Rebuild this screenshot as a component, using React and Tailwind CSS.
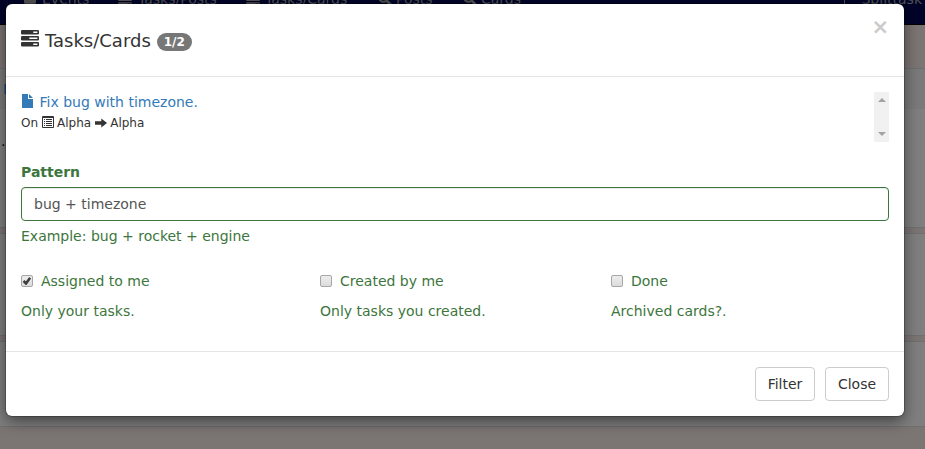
const navItem = 'flex items-center whitespace-nowrap';

function ServerIcon({ className }) {
  return (
    <svg className={className} viewBox="0 0 18 17" fill="currentColor" fillRule="evenodd">
      <path d="M.8 0h16.4l.8.8v2.9l-.8.8H.8L0 3.7V.8zM12.3 1.6v1.3h4.1V1.6z" />
      <path d="M.8 6h16.4l.8.8v2.9l-.8.8H.8L0 9.7V6.8zM8.3 7.6v1.3h8.1V7.6z" />
      <path d="M.8 12h16.4l.8.8v2.9l-.8.8H.8L0 15.7V12.8zM12.3 13.6v1.3h4.1v-1.3z" />
    </svg>
  );
}

function FileIcon() {
  return (
    <svg className="h-[14px] w-[12px] shrink-0" viewBox="0 0 12 14" fill="currentColor">
      <path d="M1 0h6v5h5v9H1z" />
      <path d="M8 0 12 4H8z" />
    </svg>
  );
}

function ListIcon() {
  return (
    <svg className="h-[12px] w-[12px] shrink-0" viewBox="0 0 12 12">
      <path d="M.5.5h11v11H.5zM.5 1.5h11" fill="none" stroke="currentColor" />
      <path
        d="M2 3.5h1M4 3.5h6M2 5.5h1M4 5.5h6M2 7.5h1M4 7.5h6M2 9.5h1M4 9.5h6"
        fill="none"
        stroke="currentColor"
      />
    </svg>
  );
}

function ArrowIcon() {
  return (
    <svg className="h-[10px] w-[12px] shrink-0" viewBox="0 0 12 10" fill="currentColor">
      <path d="M0 3.3h6.3V.4L12 5 6.3 9.6V6.7H0z" />
    </svg>
  );
}

function SearchIcon() {
  return (
    <svg className="h-[14px] w-[14px]" viewBox="0 0 14 14" fill="none" stroke="currentColor">
      <circle cx="5.5" cy="5.5" r="4.3" strokeWidth="2" />
      <path d="m9 9 4 4" strokeWidth="2.6" />
    </svg>
  );
}

function Check({ checked, label, help }) {
  return (
    <div>
      <label className="flex h-5 items-center">
        <span className="flex h-[12px] w-[12px] items-center justify-center rounded-[2px] border border-[#a6a6a6] bg-linear-to-b from-[#ededed] to-[#dcdcdc]">
          {checked && (
            <svg className="h-[8px] w-[8px] shrink-0" viewBox="0 0 8 8" fill="none" stroke="#3c3c3c">
              <path d="M.5 4 3 6.5 7.2.8" strokeWidth="2.5" />
            </svg>
          )}
        </span>
        <span className="ml-2">{label}</span>
      </label>
      <p className="mt-[10px] h-5">{help}</p>
    </div>
  );
}

function Backdrop() {
  return (
    <div className="flex h-full flex-col">
      <nav className="flex h-[25px] shrink-0 items-start border-b border-black bg-[#000428] text-[#525252]">
        <div className="-mt-[11px] flex h-5 w-full">
          <div className={`${navItem} ml-[24px] w-[94px]`}>
            <svg className="mr-[6px] h-[14px] w-[12px]" viewBox="0 0 12 14" fill="currentColor">
              <path d="M0 0h12v10c0 2-3 3.5-6 3.5S0 12 0 10z" />
            </svg>
            Events
          </div>
          <div className={`${navItem} w-[128px]`}>
            <ServerIcon className="mr-[6px] h-[13px] w-[14px]" />
            Tasks/Posts
          </div>
          <div className={`${navItem} w-[132px]`}>
            <ServerIcon className="mr-[5px] h-[13px] w-[14px]" />
            Tasks/Cards
          </div>
          <div className={`${navItem} w-[85px] gap-1`}><SearchIcon />Posts</div>
          <div className={`${navItem} gap-1`}><SearchIcon />Cards</div>
          <div className={`${navItem} ml-auto mr-[3px]`}>
            <span className="mr-[16px] h-[14px] w-px bg-[#4d4d4d]" />
            Splittask
          </div>
        </div>
      </nav>
      <div className="h-[43px] shrink-0" />
      <section className="h-[160px] shrink-0 border-y border-[#6f6f6f] bg-[#7f7f7f]">
        <div className="h-[40px] bg-[#7a7a7a] pt-[10px] pl-[3px] text-[#0d4f8b]">N</div>
        <div className="pt-[22px] pl-px text-black">.</div>
      </section>
      <section className="mt-[5px] h-[103px] shrink-0 border-y border-[#6f6f6f] bg-[#7f7f7f]" />
      <section className="mt-[5px] h-[86px] shrink-0 border-y border-[#6f6f6f] bg-[#7f7f7f]" />
    </div>
  );
}

export default function App() {
  return (
    <div className="relative h-[449px] w-[925px] overflow-hidden bg-[#7b7574] font-['DejaVu_Sans',sans-serif] text-[14px] leading-5 text-[#333]">
      <Backdrop />
      <div className="absolute top-[4px] left-[6px] flex h-[412px] w-[898px] flex-col rounded-[6px] bg-white shadow-[0_5px_15px_rgba(0,0,0,0.5),0_0_0_1px_rgba(0,0,0,0.2)]">
        <header className="flex h-[73px] shrink-0 items-start border-b border-[#e5e5e5] px-[15px]">
          <ServerIcon className="mt-[26px] h-[17px] w-[18px]" />
          <h4 className="mt-[27px] ml-[6px] text-[18px] leading-5 font-normal">Tasks/Cards</h4>
          <span className="mt-[29px] ml-[6px] flex h-[18px] w-[35px] items-center justify-center rounded-full bg-[#777] text-[12px] leading-3 font-bold text-white">
            1/2
          </span>
          <button className="mt-[13px] ml-auto text-[21px] leading-[21px] font-bold text-[#cbcbcb]">×</button>
        </header>
        <main className="flex grow flex-col px-[15px] pt-[15px] text-[#3c763d]">
          <div className="flex h-[50px] shrink-0 justify-between">
            <div>
              <a className="flex h-5 items-center text-[#337ab7]">
                <span className="-mt-[2px]"><FileIcon /></span>
                <span className="ml-[6.5px]">Fix bug with timezone.</span>
              </a>
              <p className="flex h-[21px] items-center text-[12px] text-[#333]">
                On
                <span className="-mt-[2px] ml-[4px]"><ListIcon /></span>
                <span className="ml-[3px]">Alpha</span>
                <span className="mr-[3.5px] ml-[3.5px]"><ArrowIcon /></span>
                Alpha
              </p>
            </div>
            <div className="flex w-[15px] flex-col items-center justify-between bg-[#f1f1f1] py-[6px] text-[#a3a3a3]">
              <svg className="h-[4px] w-[8px]" viewBox="0 0 8 4" fill="currentColor"><path d="M4 0 8 4H0z" /></svg>
              <svg className="h-[4px] w-[8px]" viewBox="0 0 8 4" fill="currentColor"><path d="M0 0h8L4 4z" /></svg>
            </div>
          </div>
          <label className="mt-[20px] h-5 font-bold">Pattern</label>
          <div className="mt-[5px] flex h-[34px] shrink-0 items-center rounded-[4px] border border-[#3c763d] px-3 text-[#555] shadow-[inset_0_1px_1px_rgba(0,0,0,0.075)]">
            bug + timezone
          </div>
          <p className="mt-[5px] h-5">Example: bug + rocket + engine</p>
          <div className="mt-[25px] grid grid-cols-[299px_291px_1fr]">
            <Check checked label="Assigned to me" help="Only your tasks." />
            <Check label="Created by me" help="Only tasks you created." />
            <Check label="Done" help="Archived cards?." />
          </div>
        </main>
        <footer className="flex h-[65px] shrink-0 items-start justify-end gap-[10px] border-t border-[#e5e5e5] px-[15px] pt-[15px]">
          <button className="h-[34px] w-[60px] rounded-[4px] border border-[#ccc]">Filter</button>
          <button className="h-[34px] w-[64px] rounded-[4px] border border-[#ccc]">Close</button>
        </footer>
      </div>
    </div>
  );
}
